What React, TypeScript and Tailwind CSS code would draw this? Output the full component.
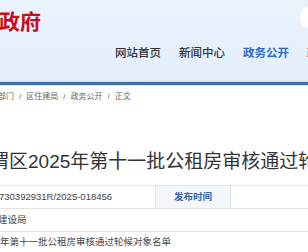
import React from "react";

const font = { fontFamily: '"Liberation Sans", "Noto Sans CJK SC", sans-serif' };

const navItems = [
  { label: "网站首页", active: false },
  { label: "新闻中心", active: false },
  { label: "政务公开", active: true },
  { label: "政务服务", active: false },
];

const crumbs = ["区住建局", "政务公开", "正文"];

export default function App() {
  return (
    <div className="w-[308px] h-[252px] overflow-hidden bg-white text-[#333]" style={font}>
      {/* header */}
      <header className="relative h-[81px] bg-gradient-to-b from-[#eaf3fc] to-[#e4effb] overflow-hidden">
        <div className="pt-[9px] -ml-[1px] text-[21px] leading-[26px] font-bold text-[#c80d16] whitespace-nowrap">
          政府
        </div>
        <nav className="flex gap-[18px] ml-[115px] mt-[10px] whitespace-nowrap text-[11.5px] leading-[16px] font-medium">
          {navItems.map((item) => (
            <span key={item.label} className={item.active ? "text-[#2f6bc0] font-bold" : "text-[#333]"}>
              {item.label}
            </span>
          ))}
        </nav>
        <div className="absolute left-[300px] top-[7px] w-[40px] h-[21px] rounded-full bg-white" />
      </header>
      <div className="h-[1px] bg-[#c9def3]" />
      <div className="h-[3px] bg-[#3d6fa6]" />
      <div className="h-[1px] bg-[#d7e7f7]" />

      {/* breadcrumb */}
      <div className="flex items-center mt-[4px] -ml-[2px] h-[14px] text-[8px] leading-[14px] text-[#666] whitespace-nowrap">
        <span>部门</span>
        {crumbs.map((c) => (
          <React.Fragment key={c}>
            <span className="mx-[5px]">/</span>
            <span>{c}</span>
          </React.Fragment>
        ))}
      </div>

      {/* title */}
      <h1 className="mt-[46px] -ml-[10px] text-[19px] leading-[24px] text-[#333] whitespace-nowrap">
        渭区2025年第十一批公租房审核通过轮候对象名单
      </h1>

      {/* info table */}
      <div className="mt-[11px] border-t border-[#e3e3e3] text-[9.5px] text-[#444]">
        <div className="flex h-[23px] border-b border-[#e3e3e3]">
          <div className="w-[156px] flex items-center -ml-[1px] whitespace-nowrap">730392931R/2025-018456</div>
          <div className="w-[76px] flex items-center justify-center bg-[#f3f6fa] border-x border-[#e3e3e3] text-[#3563ad] font-bold">
            发布时间
          </div>
          <div className="flex-1" />
        </div>
        <div className="flex items-center h-[23px] -ml-[2px] border-b border-[#e3e3e3] whitespace-nowrap">建设局</div>
        <div className="flex items-center h-[21px] border-b border-[#e3e3e3] whitespace-nowrap">
          年第十一批公租房审核通过轮候对象名单
        </div>
      </div>
    </div>
  );
}
